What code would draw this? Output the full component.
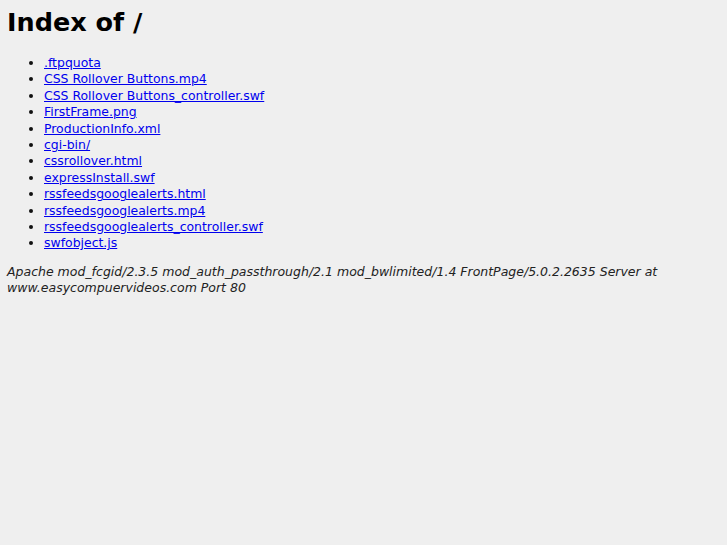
import React from "react";

const files = [
  ".ftpquota",
  "CSS Rollover Buttons.mp4",
  "CSS Rollover Buttons_controller.swf",
  "FirstFrame.png",
  "ProductionInfo.xml",
  "cgi-bin/",
  "cssrollover.html",
  "expressInstall.swf",
  "rssfeedsgooglealerts.html",
  "rssfeedsgooglealerts.mp4",
  "rssfeedsgooglealerts_controller.swf",
  "swfobject.js",
];

export default function App() {
  return (
    <div
      className="min-h-[545px] w-full bg-[#efefef] px-[7px] pt-[1px] text-[#111]"
      style={{ fontFamily: '"DejaVu Sans", Verdana, sans-serif' }}
    >
      <h1 className="mt-[7px] mb-[19px] text-[25.5px] font-bold leading-[28px] text-black">Index of /</h1>
      <ul className="list-disc pl-[37px] text-[12.45px] leading-[16.4px]">
        {files.map((f) => (
          <li key={f}>
            <a href="#" className="text-[#0000ee] underline">
              {f}
            </a>
          </li>
        ))}
      </ul>
      <address className="mt-[12px] text-[12.5px] italic leading-[16.5px] text-[#222]">
        Apache mod_fcgid/2.3.5 mod_auth_passthrough/2.1 mod_bwlimited/1.4 FrontPage/5.0.2.2635 Server at
        www.easycompuervideos.com Port 80
      </address>
    </div>
  );
}
